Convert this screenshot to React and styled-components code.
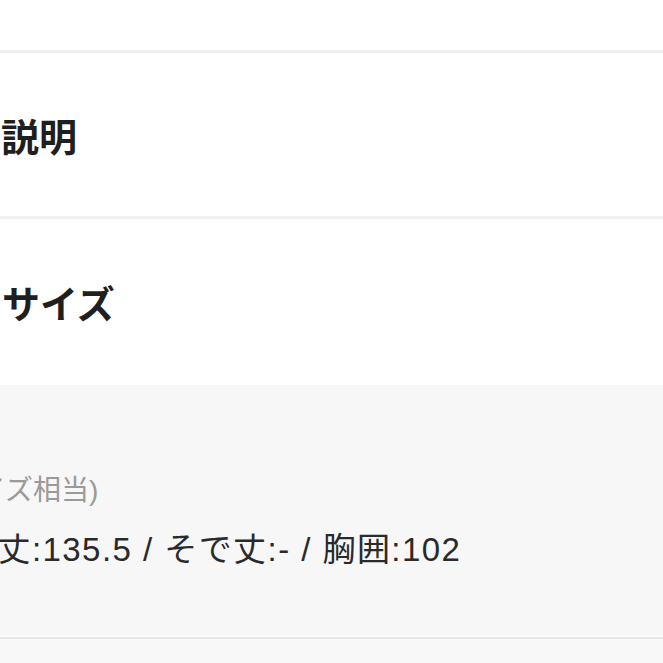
import React from 'react';
import styled, { createGlobalStyle } from 'styled-components';

const GlobalStyle = createGlobalStyle`
  html, body {
    margin: 0;
    padding: 0;
    background: #fff;
    overflow: hidden;
  }
  body {
    font-family: "Noto Sans CJK JP", "Noto Sans", sans-serif;
    color: #222;
  }
`;

const Page = styled.div`
  width: 663px;
  height: 663px;
  display: flex;
  flex-direction: column;
  overflow: hidden;
`;

const TopBlock = styled.div`
  height: 50px;
  flex-shrink: 0;
  border-bottom: 3px solid #f0f0f0;
`;

const Header = styled.div`
  height: ${p => p.$h}px;
  flex-shrink: 0;
  display: flex;
  align-items: center;
  border-bottom: ${p => (p.$line ? '3px solid #f0f0f0' : 'none')};
`;

const Title = styled.h2`
  margin: 0 0 0 ${p => p.$shift}px;
  font-size: 38px;
  font-weight: 700;
  line-height: 1;
  color: #1f1f1f;
  white-space: nowrap;
`;

const Detail = styled.div`
  height: 254px;
  flex-shrink: 0;
  background: #f7f7f7;
  display: flex;
  flex-direction: column;
  justify-content: center;
  gap: 22px;
  padding-top: 22px;
  box-sizing: border-box;
  border-bottom: 2px solid #e6e6e6;
  box-shadow: inset 0 -1px 0 #fdfdfd;
`;

const Note = styled.div`
  margin-left: ${p => p.$shift}px;
  font-family: "Liberation Sans", "Noto Sans CJK JP", sans-serif;
  font-size: 28px;
  line-height: 1.2;
  color: #9a9a9a;
  white-space: nowrap;
`;

const Measure = styled.div`
  margin-left: ${p => p.$shift}px;
  font-family: "Liberation Sans", "Noto Sans CJK JP", sans-serif;
  font-size: 33px;
  letter-spacing: 1.45px;
  line-height: 1.2;
  color: #2a2a2a;
  white-space: nowrap;
`;

const Rest = styled.div`
  flex: 1;
  background: #f8f8f8;
`;

const App = () => {
  return (
    <Page>
      <GlobalStyle />
      <TopBlock />
      <Header $h={163} $line>
        <Title $shift={-75}>商品説明</Title>
      </Header>
      <Header $h={166}>
        <Title $shift={-74}>商品サイズ</Title>
      </Header>
      <Detail>
        <Note $shift={-143}>(フリーサイズ相当)</Note>
        <Measure $shift={-37}>着丈:135.5 / そで丈:- / 胸囲:102</Measure>
      </Detail>
      <Rest />
    </Page>
  );
};

export default App;
